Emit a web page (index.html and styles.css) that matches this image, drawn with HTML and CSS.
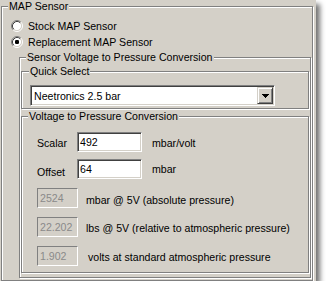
FILE: index.html
```html
<!DOCTYPE html>
<html>
<head>
<meta charset="utf-8">
<title>MAP Sensor</title>
<link rel="stylesheet" href="styles.css">
</head>
<body>
<div class="panel">
  <fieldset class="group outer">
    <legend>MAP Sensor</legend>
    <div class="radios">
      <label class="radio">
        <svg class="radio-icon" viewBox="0 0 12 12" width="12" height="12">
          <circle cx="6" cy="6" r="4.5" fill="#fff"/>
          <path d="M2.11 9.89A5.5 5.5 0 0 1 9.89 2.11" fill="none" stroke="#808080"/>
          <path d="M9.89 2.11A5.5 5.5 0 0 1 2.11 9.89" fill="none" stroke="#fff"/>
          <path d="M2.82 9.18A4.5 4.5 0 0 1 9.18 2.82" fill="none" stroke="#404040"/>
          <path d="M9.18 2.82A4.5 4.5 0 0 1 2.82 9.18" fill="none" stroke="#d4d0c8"/>
        </svg>
        <span>Stock MAP Sensor</span>
      </label>
      <label class="radio">
        <svg class="radio-icon" viewBox="0 0 12 12" width="12" height="12">
          <circle cx="6" cy="6" r="4.5" fill="#fff"/>
          <path d="M2.11 9.89A5.5 5.5 0 0 1 9.89 2.11" fill="none" stroke="#808080"/>
          <path d="M9.89 2.11A5.5 5.5 0 0 1 2.11 9.89" fill="none" stroke="#fff"/>
          <path d="M2.82 9.18A4.5 4.5 0 0 1 9.18 2.82" fill="none" stroke="#404040"/>
          <path d="M9.18 2.82A4.5 4.5 0 0 1 2.82 9.18" fill="none" stroke="#d4d0c8"/>
          <rect x="4" y="4" width="4" height="4" rx="1.3" fill="#000"/>
        </svg>
        <span>Replacement MAP Sensor</span>
      </label>
    </div>
    <fieldset class="group sensor">
      <legend>Sensor Voltage to Pressure Conversion</legend>
      <fieldset class="group quick">
        <legend>Quick Select</legend>
        <div class="combo">
          <span class="combo-text">Neetronics 2.5 bar</span>
          <span class="combo-btn">
            <svg viewBox="0 0 7 4" width="7" height="4">
              <rect x="0" y="0" width="7" height="1"/>
              <rect x="1" y="1" width="5" height="1"/>
              <rect x="2" y="2" width="3" height="1"/>
              <rect x="3" y="3" width="1" height="1"/>
            </svg>
          </span>
        </div>
      </fieldset>
      <fieldset class="group volt">
        <legend>Voltage to Pressure Conversion</legend>
        <div class="rows">
          <div class="edit-row">
            <span class="lbl lbl-scalar">Scalar</span>
            <div class="edit">492</div>
            <span class="unit unit-scalar">mbar/volt</span>
          </div>
          <div class="edit-row">
            <span class="lbl lbl-offset">Offset</span>
            <div class="edit">64</div>
            <span class="unit unit-offset">mbar</span>
          </div>
          <div class="ro-row">
            <div class="ro">2524</div>
            <span class="ro-label ro-label-1">mbar @ 5V (absolute pressure)</span>
          </div>
          <div class="ro-row">
            <div class="ro">22.202</div>
            <span class="ro-label">lbs @ 5V (relative to atmospheric pressure)</span>
          </div>
          <div class="ro-row">
            <div class="ro">1.902</div>
            <span class="ro-label ro-label-3">volts at standard atmospheric pressure</span>
          </div>
        </div>
      </fieldset>
    </fieldset>
  </fieldset>
</div>
</body>
</html>
```

FILE: styles.css
```css
* {
  box-sizing: border-box;
}

html,
body {
  margin: 0;
  padding: 0;
  background: #fff;
}

body {
  font-family: "Liberation Sans", Arial, sans-serif;
  font-size: 10.6px;
  line-height: 13px;
  color: #000;
}

.panel {
  display: flow-root;
  width: 316px;
  height: 281px;
  background: #d4d0c8;
  box-shadow: 4px 4px 5px rgba(0, 0, 0, 0.55);
}

.group {
  margin: 0;
  padding: 0;
  min-width: 0;
  border: 1px solid #808080;
  box-shadow: 1px 1px 0 #fff, inset 1px 1px 0 #fff;
}

.group > legend {
  padding: 0 1px;
  margin-left: 6px;
  line-height: 13px;
  background: #d4d0c8;
  white-space: nowrap;
}

.outer {
  margin: 0 3px 0 1px;
  padding: 5px 0 2px 0;
}

.radios {
  padding-left: 9px;
  margin-bottom: 1px;
}

.radio {
  display: flex;
  align-items: center;
  height: 16px;
}

.radio-icon {
  flex: none;
  display: block;
  margin-right: 5px;
}

.sensor {
  margin: 0 1px 0 17px;
  padding: 1px 0 2px 0;
}

.quick {
  margin: 0 1px;
  padding: 7px 0 2px 0;
}

.quick > legend {
  margin-left: 7px;
}

.combo {
  display: flex;
  align-items: stretch;
  width: 245px;
  height: 21px;
  margin-left: 8px;
  padding: 1px;
  background: #fff;
  border: 1px solid;
  border-color: #808080 #fff #fff #808080;
  box-shadow: inset 1px 1px 0 #404040, inset -1px -1px 0 #d4d0c8;
}

.combo-text {
  flex: 1;
  padding-left: 2px;
  line-height: 17px;
  margin-top: 1px;
}

.combo-btn {
  flex: none;
  display: flex;
  align-items: center;
  justify-content: center;
  width: 16px;
  height: 17px;
  background: #d4d0c8;
  border: 1px solid;
  border-color: #d4d0c8 #404040 #404040 #d4d0c8;
  box-shadow: inset 1px 1px 0 #fff, inset -1px -1px 0 #808080;
}

.combo-btn svg {
  display: block;
  fill: #000;
  margin-left: 1px;
}

.volt {
  margin: 1px 1px 2px 1px;
  padding: 9px 0 6px 0;
}

.rows {
  display: flex;
  flex-direction: column;
  padding-left: 15px;
}

.edit-row,
.ro-row {
  display: flex;
  align-items: center;
  height: 20px;
}

.edit-row + .edit-row {
  margin-top: 7px;
}

.ro-row {
  margin-top: 9px;
}

.lbl {
  width: 40px;
  flex: none;
}

.lbl-scalar,
.unit-scalar {
  margin-top: 3px;
}

.lbl-offset {
  margin-top: 6px;
}

.unit-offset {
  margin-top: 0;
}

.edit {
  flex: none;
  width: 65px;
  height: 20px;
  padding-left: 2px;
  line-height: 18px;
  background: #fff;
  border: 1px solid;
  border-color: #808080 #fff #fff #808080;
  box-shadow: inset 1px 1px 0 #404040, inset -1px -1px 0 #d4d0c8;
}

.unit {
  margin-left: 10px;
}

.ro {
  flex: none;
  width: 41px;
  height: 20px;
  padding-left: 2px;
  line-height: 18px;
  color: #8a8a8a;
  border: 1px solid;
  border-color: #808080 #fff #fff #808080;
}

.ro-label {
  margin-left: 8px;
  margin-top: 2px;
}

.ro-label-1 {
  margin-top: 5px;
}

.ro-label-3 {
  margin-left: 10px;
}
```
